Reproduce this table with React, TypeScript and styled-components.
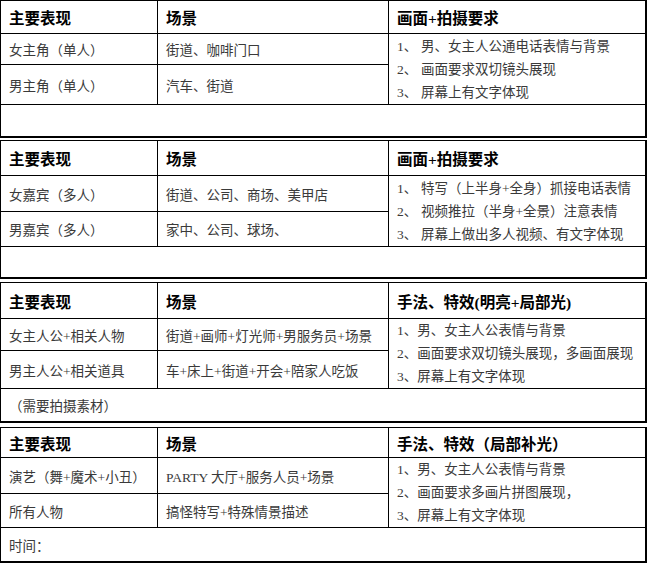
import React from "react";
import styled, { createGlobalStyle } from "styled-components";

const GlobalStyle = createGlobalStyle`
  html, body {
    margin: 0;
    padding: 0;
    background: #fff;
  }
  body {
    font-family: "Liberation Serif", "Noto Sans CJK SC", serif;
    color: #333;
  }
  * {
    box-sizing: border-box;
  }
`;

const Sheet = styled.div`
  width: 647px;
  display: flex;
  flex-direction: column;
`;

const Block = styled.div<{ rows: string; h: number; top: number }>`
  display: grid;
  grid-template-columns: 157px 231px 1fr;
  grid-template-rows: ${(p) => p.rows};
  height: ${(p) => p.h}px;
  margin-top: ${(p) => p.top}px;
  border-top: 1px solid #000;
  border-left: 1px solid #000;
  border-right: 2px solid #000;
  border-bottom: 2px solid #000;
`;

const Cell = styled.div<{ last?: boolean }>`
  display: flex;
  align-items: center;
  padding-left: 8px;
  border-bottom: 1px solid #000;
  border-right: ${(p) => (p.last ? "none" : "1px solid #000")};
  font-size: 13.5px;
  color: #3a3a3a;
  white-space: nowrap;
  overflow: hidden;
`;

const HeadCell = styled(Cell)`
  font-size: 15.5px;
  font-weight: 700;
  color: #000;
`;

const ListCell = styled.div`
  grid-row: span 2;
  display: flex;
  flex-direction: column;
  justify-content: center;
  padding: 0 0 0 8px;
  border-bottom: 1px solid #000;
  font-size: 13.5px;
  color: #3a3a3a;
  white-space: nowrap;
  line-height: 23px;
`;

const Marker = styled.span<{ wide?: boolean }>`
  display: inline-block;
  width: ${(p) => (p.wide ? "24px" : "auto")};
`;

const NoteRow = styled.div`
  grid-column: 1 / -1;
  display: flex;
  align-items: center;
  padding-left: 8px;
  font-size: 13.5px;
  color: #3a3a3a;
`;

type Section = {
  rows: string;
  h: number;
  top: number;
  heads: [string, string, string];
  items: [string, string][];
  list: string[];
  wideMarker: boolean;
  note?: string;
};

const sections: Section[] = [
  {
    rows: "33px 31px 40px 1fr",
    h: 138,
    top: 0,
    heads: ["主要表现", "场景", "画面+拍摄要求"],
    items: [
      ["女主角（单人）", "街道、咖啡门口"],
      ["男主角（单人）", "汽车、街道"],
    ],
    list: ["男、女主人公通电话表情与背景", "画面要求双切镜头展现", "屏幕上有文字体现"],
    wideMarker: true,
  },
  {
    rows: "35px 36px 35px 1fr",
    h: 139,
    top: 2,
    heads: ["主要表现", "场景", "画面+拍摄要求"],
    items: [
      ["女嘉宾（多人）", "街道、公司、商场、美甲店"],
      ["男嘉宾（多人）", "家中、公司、球场、"],
    ],
    list: ["特写（上半身+全身）抓接电话表情", "视频推拉（半身+全景）注意表情", "屏幕上做出多人视频、有文字体现"],
    wideMarker: true,
  },
  {
    rows: "36px 32px 38px 1fr",
    h: 141,
    top: 3,
    heads: ["主要表现", "场景", "手法、特效(明亮+局部光)"],
    items: [
      ["女主人公+相关人物", "街道+画师+灯光师+男服务员+场景"],
      ["男主人公+相关道具", "车+床上+街道+开会+陪家人吃饭"],
    ],
    list: ["男、女主人公表情与背景", "画面要求双切镜头展现，多画面展现", "屏幕上有文字体现"],
    wideMarker: false,
    note: "（需要拍摄素材）",
  },
  {
    rows: "30px 36px 34px 1fr",
    h: 136,
    top: 4,
    heads: ["主要表现", "场景", "手法、特效（局部补光）"],
    items: [
      ["演艺（舞+魔术+小丑）", "PARTY 大厅+服务人员+场景"],
      ["所有人物", "搞怪特写+特殊情景描述"],
    ],
    list: ["男、女主人公表情与背景", "画面要求多画片拼图展现，", "屏幕上有文字体现"],
    wideMarker: false,
    note: "时间：",
  },
];

export default function App() {
  return (
    <>
      <GlobalStyle />
      <Sheet>
        {sections.map((s, i) => (
          <Block key={i} rows={s.rows} h={s.h} top={s.top}>
            <HeadCell>{s.heads[0]}</HeadCell>
            <HeadCell>{s.heads[1]}</HeadCell>
            <HeadCell last>{s.heads[2]}</HeadCell>
            <Cell>{s.items[0][0]}</Cell>
            <Cell>{s.items[0][1]}</Cell>
            <ListCell>
              {s.list.map((line, j) => (
                <div key={j}>
                  <Marker wide={s.wideMarker}>{j + 1}、</Marker>
                  {line}
                </div>
              ))}
            </ListCell>
            <Cell>{s.items[1][0]}</Cell>
            <Cell>{s.items[1][1]}</Cell>
            <NoteRow>{s.note}</NoteRow>
          </Block>
        ))}
      </Sheet>
    </>
  );
}
